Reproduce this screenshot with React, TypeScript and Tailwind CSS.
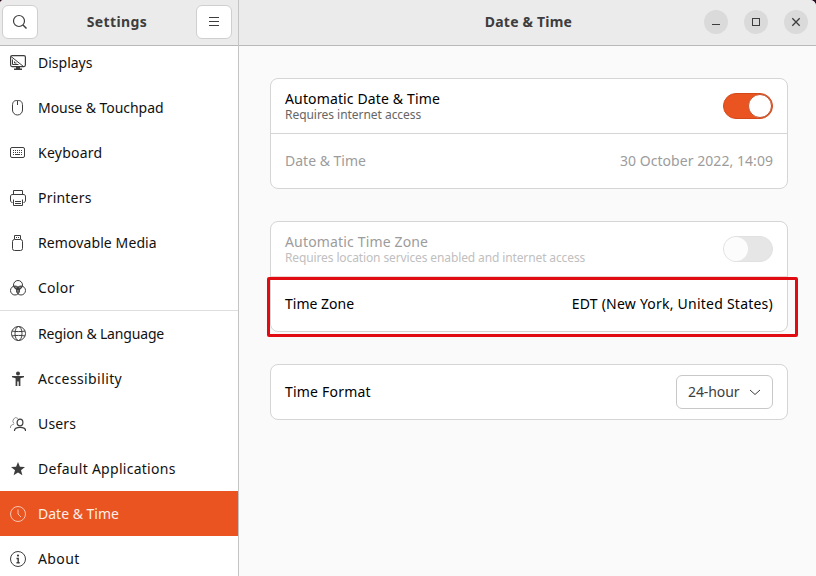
import React, { useState } from 'react';
import clsx from 'clsx';

const iconProps = {
  width: 16,
  height: 16,
  viewBox: '0 0 16 16',
  fill: 'none',
  stroke: 'currentColor',
  strokeWidth: 1,
  className: 'shrink-0',
};

const DisplaysIcon = () => (
  <svg {...iconProps}>
    <rect x="0.6" y="0.6" width="14.8" height="11" rx="1.5" strokeWidth="1.2" />
    <path d="M1 1.500 13.500 11.500M2.500 4.500v5h6M4.500 6.500v1.500h2" />
    <path d="M6 12h4v1.500h2V15H4v-1.500h2z" fill="currentColor" stroke="none" />
  </svg>
);

const MouseIcon = () => (
  <svg {...iconProps}>
    <path d="M7.500 .5C4 .5 2.500 1.500 2.500 6v4a5 5 0 0 0 10 0V6c0-4.500-1.500-5.500-5-5.500zM7.500 1v4" />
  </svg>
);

const KeyboardIcon = () => (
  <svg {...iconProps}>
    <rect x="0.5" y="2.5" width="14" height="10" rx="1.5" />
    <path d="M3 5.500h10M3 7.500h10" strokeDasharray="1 1" />
    <path d="M3 9.500h1M5 9.500h5M11 9.500h1" />
  </svg>
);

const PrintersIcon = () => (
  <svg {...iconProps}>
    <path d="M3.500 4V.5h9V4M2.500 12.500C1 12.500.5 11.500.5 10V7c0-2 .5-2.500 2.500-2.500h10c2 0 2.500.5 2.500 2.500v3c0 1.500-.5 2.500-2 2.500" />
    <path d="M3.500 9.500v6h9v-6M5 11.500h6M5 13.500h6" />
  </svg>
);

const RemovableMediaIcon = () => (
  <svg {...iconProps}>
    <path d="M4.500 4V.5h6V4M6 2.500h1M8 2.500h1" />
    <rect x="2.500" y="4.500" width="10" height="11" rx="2" />
  </svg>
);

const ColorIcon = () => (
  <svg {...iconProps}>
    <circle cx="8" cy="5" r="4.5" />
    <circle cx="5" cy="10.5" r="4.5" />
    <circle cx="11" cy="10.5" r="4.5" />
    {/* Overlaps, darkest where all three meet */}
    <path
      d="M3.600 6.200C5 5.600 6.800 6 8 7.100c1.200-1.100 3-1.500 4.400-.9-.2 1.500-1.300 2.800-2.400 3.200 0 1.800-.8 3.400-2 4.500-1.200-1.100-2-2.700-2-4.500-1.100-.4-2.200-1.700-2.400-3.200z"
      fill="currentColor"
      fillOpacity="0.7"
      stroke="none"
    />
    <path d="M8 7l2 2.300-2 .6-2-.6z" fill="currentColor" stroke="none" />
  </svg>
);

const RegionIcon = () => (
  <svg {...iconProps}>
    <circle cx="8.5" cy="7.5" r="7" />
    <ellipse cx="8.5" cy="7.5" rx="3.5" ry="7" />
    <path d="M2 5c3 .8 10 .8 13 0M2 10c3-.8 10-.8 13 0" />
  </svg>
);

const AccessibilityIcon = () => (
  <svg {...iconProps} fill="currentColor" stroke="none">
    <circle cx="8" cy="2.500" r="2" />
    <path d="M2 5h12v1.300l-3.600.9V15H8.700v-4.500H7.300V15H5.600V7.200L2 6.300z" />
  </svg>
);

const UsersIcon = () => (
  <svg {...iconProps}>
    <path d="M8 2.500a2.700 2.900 0 1 0-4 5M.5 12V11c0-1.500 1.500-2.500 3.500-2.800" opacity="0.55" />
    <ellipse cx="10" cy="6.500" rx="2.900" ry="3.300" strokeWidth="1.200" />
    <path d="M4.500 15v-.5c0-2 2-3.200 5.500-3.200s5.500 1.200 5.500 3.200v.5" strokeWidth="1.200" />
  </svg>
);

const StarIcon = () => (
  <svg {...iconProps} fill="currentColor" stroke="none">
    <path d="M8 1l1.900 4.800 5.100.2-4 3.300 1.400 5L8 11.400l-4.400 2.900 1.400-5L1 6l5.100-.2z" />
  </svg>
);

const ClockIcon = () => (
  <svg {...iconProps}>
    <circle cx="8" cy="8" r="7.5" />
    <path d="M8 3.500V8l3 3" />
  </svg>
);

const AboutIcon = () => (
  <svg {...iconProps}>
    <circle cx="8" cy="8" r="7.5" />
    <circle cx="8" cy="4.600" r="1.100" fill="currentColor" stroke="none" />
    <path d="M6.500 7.500h1.700V12M6.500 11.700h3.200" strokeWidth="1.400" />
  </svg>
);

interface NavItem {
  label: string;
  icon: React.FC;
  tracking?: string;
  separated?: boolean;
}

const navItems: NavItem[] = [
  { label: 'Displays', icon: DisplaysIcon },
  { label: 'Mouse & Touchpad', icon: MouseIcon, tracking: 'tracking-[-0.05px]' },
  { label: 'Keyboard', icon: KeyboardIcon, tracking: 'tracking-[0.25px]' },
  { label: 'Printers', icon: PrintersIcon, tracking: 'tracking-[0.2px]' },
  { label: 'Removable Media', icon: RemovableMediaIcon, tracking: 'tracking-[0.1px]' },
  { label: 'Color', icon: ColorIcon, tracking: 'tracking-[0.25px]' },
  { label: 'Region & Language', icon: RegionIcon, tracking: 'tracking-[-0.17px]', separated: true },
  { label: 'Accessibility', icon: AccessibilityIcon, tracking: 'tracking-[0.4px]' },
  { label: 'Users', icon: UsersIcon, tracking: 'tracking-[0.15px]' },
  { label: 'Default Applications', icon: StarIcon, tracking: 'tracking-[0.27px]' },
  { label: 'Date & Time', icon: ClockIcon },
  { label: 'About', icon: AboutIcon, tracking: 'tracking-[0.4px]' },
];

interface SwitchProps {
  checked: boolean;
  disabled?: boolean;
  onChange?: () => void;
}

const Switch: React.FC<SwitchProps> = ({ checked, disabled, onChange }) => (
  <button
    role="switch"
    aria-checked={checked}
    disabled={disabled}
    onClick={onChange}
    className={clsx(
      'flex h-[26px] w-[50px] items-center rounded-full border',
      checked ? 'justify-end border-[#d5481a] bg-[#e95420]' : 'justify-start border-[#e1e1e1] bg-[#e6e6e6]'
    )}
  >
    <span className={clsx('size-6 rounded-full', checked ? 'border border-[#c2522c] bg-white' : 'bg-[#fcfcfc]')} />
  </button>
);

const Card: React.FC<{ children: React.ReactNode }> = ({ children }) => (
  <section className="relative rounded-lg border border-[#d5d5d5] bg-white">{children}</section>
);

const App: React.FC = () => {
  const [active, setActive] = useState('Date & Time');
  const [autoDate, setAutoDate] = useState(true);

  return (
    <div className="flex h-[576px] w-[816px] overflow-hidden bg-[#2c0a1e] font-['Noto_Sans',sans-serif] text-sm text-black">
      {/* Sidebar */}
      <aside className="flex w-[239px] shrink-0 flex-col rounded-tl-[4px] border-r border-[#c4c4c4] bg-white">
        <header className="flex h-[46px] shrink-0 items-center justify-between rounded-tl-[4px] border-b border-[#b9b9b9] bg-[#ebebeb] pr-[6px] pb-[2px] pl-[2px] text-[#3d3d3d]">
          <button className="flex h-[34px] w-9 items-center justify-center rounded-md border border-[#cfcfcf] bg-white">
            <svg {...iconProps}>
              <circle cx="7" cy="7" r="5.5" strokeWidth="1.2" />
              <path d="M11 11l3.500 3.500" strokeWidth="1.4" />
            </svg>
          </button>
          <h1 className="font-bold tracking-[0.4px]">Settings</h1>
          <button className="flex h-[34px] w-9 items-center justify-center rounded-md border border-[#cfcfcf] bg-white">
            <svg {...iconProps}>
              <path d="M3 3.500h10M3 7.500h10M3 11.500h10" />
            </svg>
          </button>
        </header>
        <nav className="-mt-[6px] flex min-h-0 flex-1 flex-col overflow-hidden">
          {navItems.map(({ label, icon: Icon, tracking, separated }) => (
            <button
              key={label}
              onClick={() => setActive(label)}
              className={clsx(
                'flex shrink-0 items-center gap-3 pl-[10px] text-left',
                tracking,
                separated ? 'h-[46px] border-t border-[#dedede]' : 'h-[45px]',
                active === label ? 'bg-[#e95420] text-[#fdeee8]' : 'text-[#111]'
              )}
            >
              <span className={active === label ? 'text-[#f9c5b0]' : 'text-[#3d3d3d]'}>
                <Icon />
              </span>
              {label}
            </button>
          ))}
        </nav>
      </aside>

      {/* Panel */}
      <div className="flex flex-1 flex-col rounded-tr-[6px] bg-[#fafafa]">
        <header className="grid h-[46px] shrink-0 grid-cols-[1fr_auto_1fr] items-center rounded-tr-[6px] border-b border-[#b9b9b9] bg-[#ebebeb] pb-[2px] pl-[2px] text-[#3d3d3d]">
          <span />
          <h2 className="font-bold tracking-[0.2px]">Date &amp; Time</h2>
          <div className="flex justify-end gap-4 pr-2">
            <button className="flex size-6 items-center justify-center rounded-full bg-[#dadada]">
              <svg {...iconProps}>
                <path d="M4 10.500h8" />
              </svg>
            </button>
            <button className="flex size-6 items-center justify-center rounded-full bg-[#dadada]">
              <svg {...iconProps}>
                <rect x="4.5" y="4.5" width="7" height="7" />
              </svg>
            </button>
            <button className="flex size-6 items-center justify-center rounded-full bg-[#dadada]">
              <svg {...iconProps}>
                <path d="M4.300 4.300l7.400 7.400M11.700 4.300l-7.400 7.400" strokeWidth="1.3" />
              </svg>
            </button>
          </div>
        </header>

        <main className="flex flex-col gap-8 pt-8 pr-7 pl-[31px]">
          <Card>
            <div className="flex h-[55px] items-center justify-between border-b border-[#d5d5d5] px-[14px]">
              <div>
                <p className="leading-[17px] tracking-[0.14px]">Automatic Date &amp; Time</p>
                <p className="text-xs leading-[15px] tracking-[-0.04px] text-[#666]">Requires internet access</p>
              </div>
              <Switch checked={autoDate} onChange={() => setAutoDate(!autoDate)} />
            </div>
            <div className="flex h-[54px] items-center justify-between px-[14px] text-[#9c9c9c]">
              <span>Date &amp; Time</span>
              <span className="tracking-[0.05px]">30 October 2022, 14:09</span>
            </div>
          </Card>

          <Card>
            <div className="flex h-[55px] items-center justify-between border-b border-[#f0d4d4] px-[14px]">
              <div>
                <p className="leading-[17px] tracking-[0.16px] text-[#9c9c9c]">Automatic Time Zone</p>
                <p className="text-xs leading-[15px] tracking-[-0.12px] text-[#c0c0c0]">
                  Requires location services enabled and internet access
                </p>
              </div>
              <Switch checked={false} disabled />
            </div>
            <div className="flex h-[54px] items-center justify-between px-[14px]">
              <span>Time Zone</span>
              <span className="tracking-[0.23px]">EDT (New York, United States)</span>
            </div>
            {/* Highlight frame around the time zone row */}
            <div className="pointer-events-none absolute top-[55px] -right-[11px] -left-[4px] h-[60px] rounded-[2px] border-[3px] border-[#e00c12]" />
          </Card>

          <Card>
            <div className="flex h-[54px] items-center justify-between px-[14px]">
              <span className="tracking-[0.2px]">Time Format</span>
              <button className="flex h-[34px] w-[97px] items-center justify-between rounded-md border border-[#c8c8c8] bg-white pr-[9px] pl-[11px] tracking-[-0.1px] text-[#3d3d3d]">
                24-hour
                <svg {...iconProps}>
                  <path d="M3 6l5 4.500L13 6" />
                </svg>
              </button>
            </div>
          </Card>
        </main>
      </div>
    </div>
  );
};

export default App;
